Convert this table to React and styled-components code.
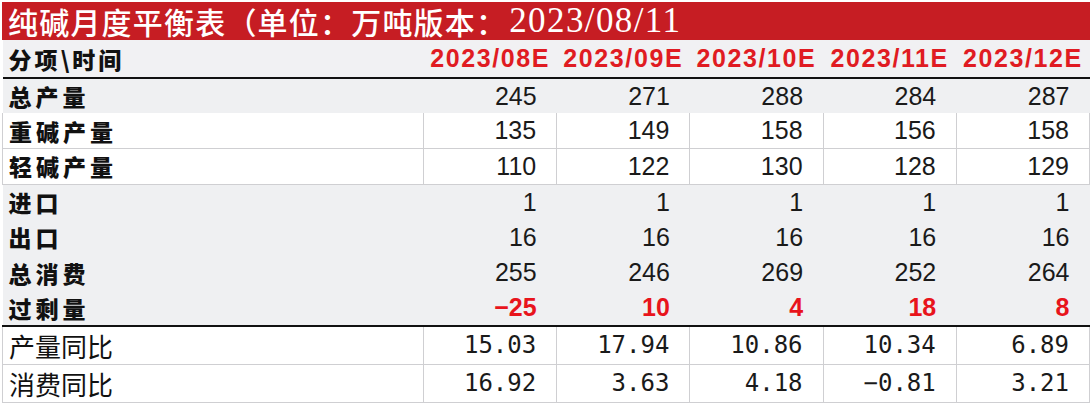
import React from 'react';
import styled, { createGlobalStyle } from 'styled-components';

const GlobalStyle = createGlobalStyle`
  html, body {
    margin: 0;
    padding: 0;
    background: #ffffff;
  }
`;

const Page = styled.div`
  width: 1092px;
  height: 404px;
  padding: 2px 2px 0 2px;
  box-sizing: border-box;
  background: #ffffff;
  overflow: hidden;
`;

const TitleBar = styled.div`
  height: 38px;
  background: #c61d23;
  color: #ffffff;
  display: flex;
  align-items: center;
  padding-left: 6px;
  white-space: nowrap;
`;

const TitleCn = styled.span`
  font-family: "Noto Sans CJK SC", sans-serif;
  font-size: 30px;
  font-weight: 500;
  letter-spacing: 1.2px;
`;

const TitleDate = styled.span`
  font-family: "Liberation Serif", serif;
  font-size: 35px;
  letter-spacing: 1.4px;
  margin-left: 2px;
`;

const Table = styled.table`
  width: 1088px;
  border-collapse: collapse;
  table-layout: fixed;
`;

const HeadRow = styled.tr`
  height: 38px;
  background: #f1f1f3;
  border-bottom: 2px solid #111111;
`;

const Row = styled.tr`
  height: ${p => (p.$tall ? 36 : 35.4)}px;
  background: ${p => (p.$plain ? '#ffffff' : '#eff0f2')};
  border-bottom: ${p => (p.$rule ? '2px solid #111111' : p.$plain ? '1px solid #cfcfd2' : 'none')};
`;

const LabelHead = styled.th`
  text-align: left;
  padding: 0 0 0 6px;
  font-family: "Noto Sans CJK SC", sans-serif;
  font-weight: 900;
  font-size: 23px;
  letter-spacing: 3px;
  color: #111111;
`;

const DateHead = styled.th`
  text-align: center;
  padding: 0;
  font-family: "Liberation Sans", Arial, sans-serif;
  font-weight: 700;
  font-size: 25px;
  letter-spacing: 1.6px;
  color: #e01b22;
  white-space: nowrap;
`;

const Label = styled.td`
  padding: 0 0 0 6px;
  white-space: nowrap;
  color: #111111;
  font-family: "Noto Sans CJK SC", sans-serif;
  font-weight: ${p => (p.$light ? 400 : 900)};
  font-size: ${p => (p.$light ? 26 : 23)}px;
  letter-spacing: ${p => (p.$light ? 0 : 4)}px;
  border-left: ${p => (p.$grid ? '1px solid #cfcfd2' : 'none')};
  border-right: ${p => (p.$grid ? '1px solid #cfcfd2' : 'none')};
`;

const Value = styled.td`
  text-align: right;
  padding: 0 20px 0 0;
  white-space: nowrap;
  font-family: ${p => (p.$mono ? '"DejaVu Sans Mono", monospace' : '"Liberation Sans", Arial, sans-serif')};
  font-size: ${p => (p.$mono ? 24 : 25)}px;
  font-weight: ${p => (p.$red ? 700 : 400)};
  color: ${p => (p.$red ? '#e8141c' : '#1a1a1a')};
  border-right: ${p => (p.$grid ? '1px solid #cfcfd2' : 'none')};
`;

const months = ['2023/08E', '2023/09E', '2023/10E', '2023/11E', '2023/12E'];

const rows = [
  { label: '总产量', values: [245, 271, 288, 284, 287] },
  { label: '重碱产量', values: [135, 149, 158, 156, 158], plain: true },
  { label: '轻碱产量', values: [110, 122, 130, 128, 129], plain: true },
  { label: '进口', values: [1, 1, 1, 1, 1] },
  { label: '出口', values: [16, 16, 16, 16, 16] },
  { label: '总消费', values: [255, 246, 269, 252, 264] },
  { label: '过剩量', values: ['−25', 10, 4, 18, 8], red: true, rule: true },
];

const ratios = [
  { label: '产量同比', values: ['15.03', '17.94', '10.86', '10.34', '6.89'] },
  { label: '消费同比', values: ['16.92', '3.63', '4.18', '−0.81', '3.21'] },
];

export default function App() {
  return (
    <Page>
      <GlobalStyle />
      <TitleBar>
        <TitleCn>纯碱月度平衡表（单位：万吨版本：</TitleCn>
        <TitleDate>2023/08/11</TitleDate>
      </TitleBar>
      <Table>
        <colgroup>
          <col style={{ width: 421 }} />
          {months.map(m => <col key={m} />)}
        </colgroup>
        <thead>
          <HeadRow>
            <LabelHead>分项\时间</LabelHead>
            {months.map(m => <DateHead key={m}>{m}</DateHead>)}
          </HeadRow>
        </thead>
        <tbody>
          {rows.map(r => (
            <Row key={r.label} $plain={r.plain} $rule={r.rule}>
              <Label $grid={r.plain}>{r.label}</Label>
              {r.values.map((v, i) => (
                <Value key={i} $grid={r.plain} $red={r.red}>{v}</Value>
              ))}
            </Row>
          ))}
          {ratios.map(r => (
            <Row key={r.label} $plain $tall>
              <Label $grid $light>{r.label}</Label>
              {r.values.map((v, i) => (
                <Value key={i} $grid $mono>{v}</Value>
              ))}
            </Row>
          ))}
        </tbody>
      </Table>
    </Page>
  );
}
